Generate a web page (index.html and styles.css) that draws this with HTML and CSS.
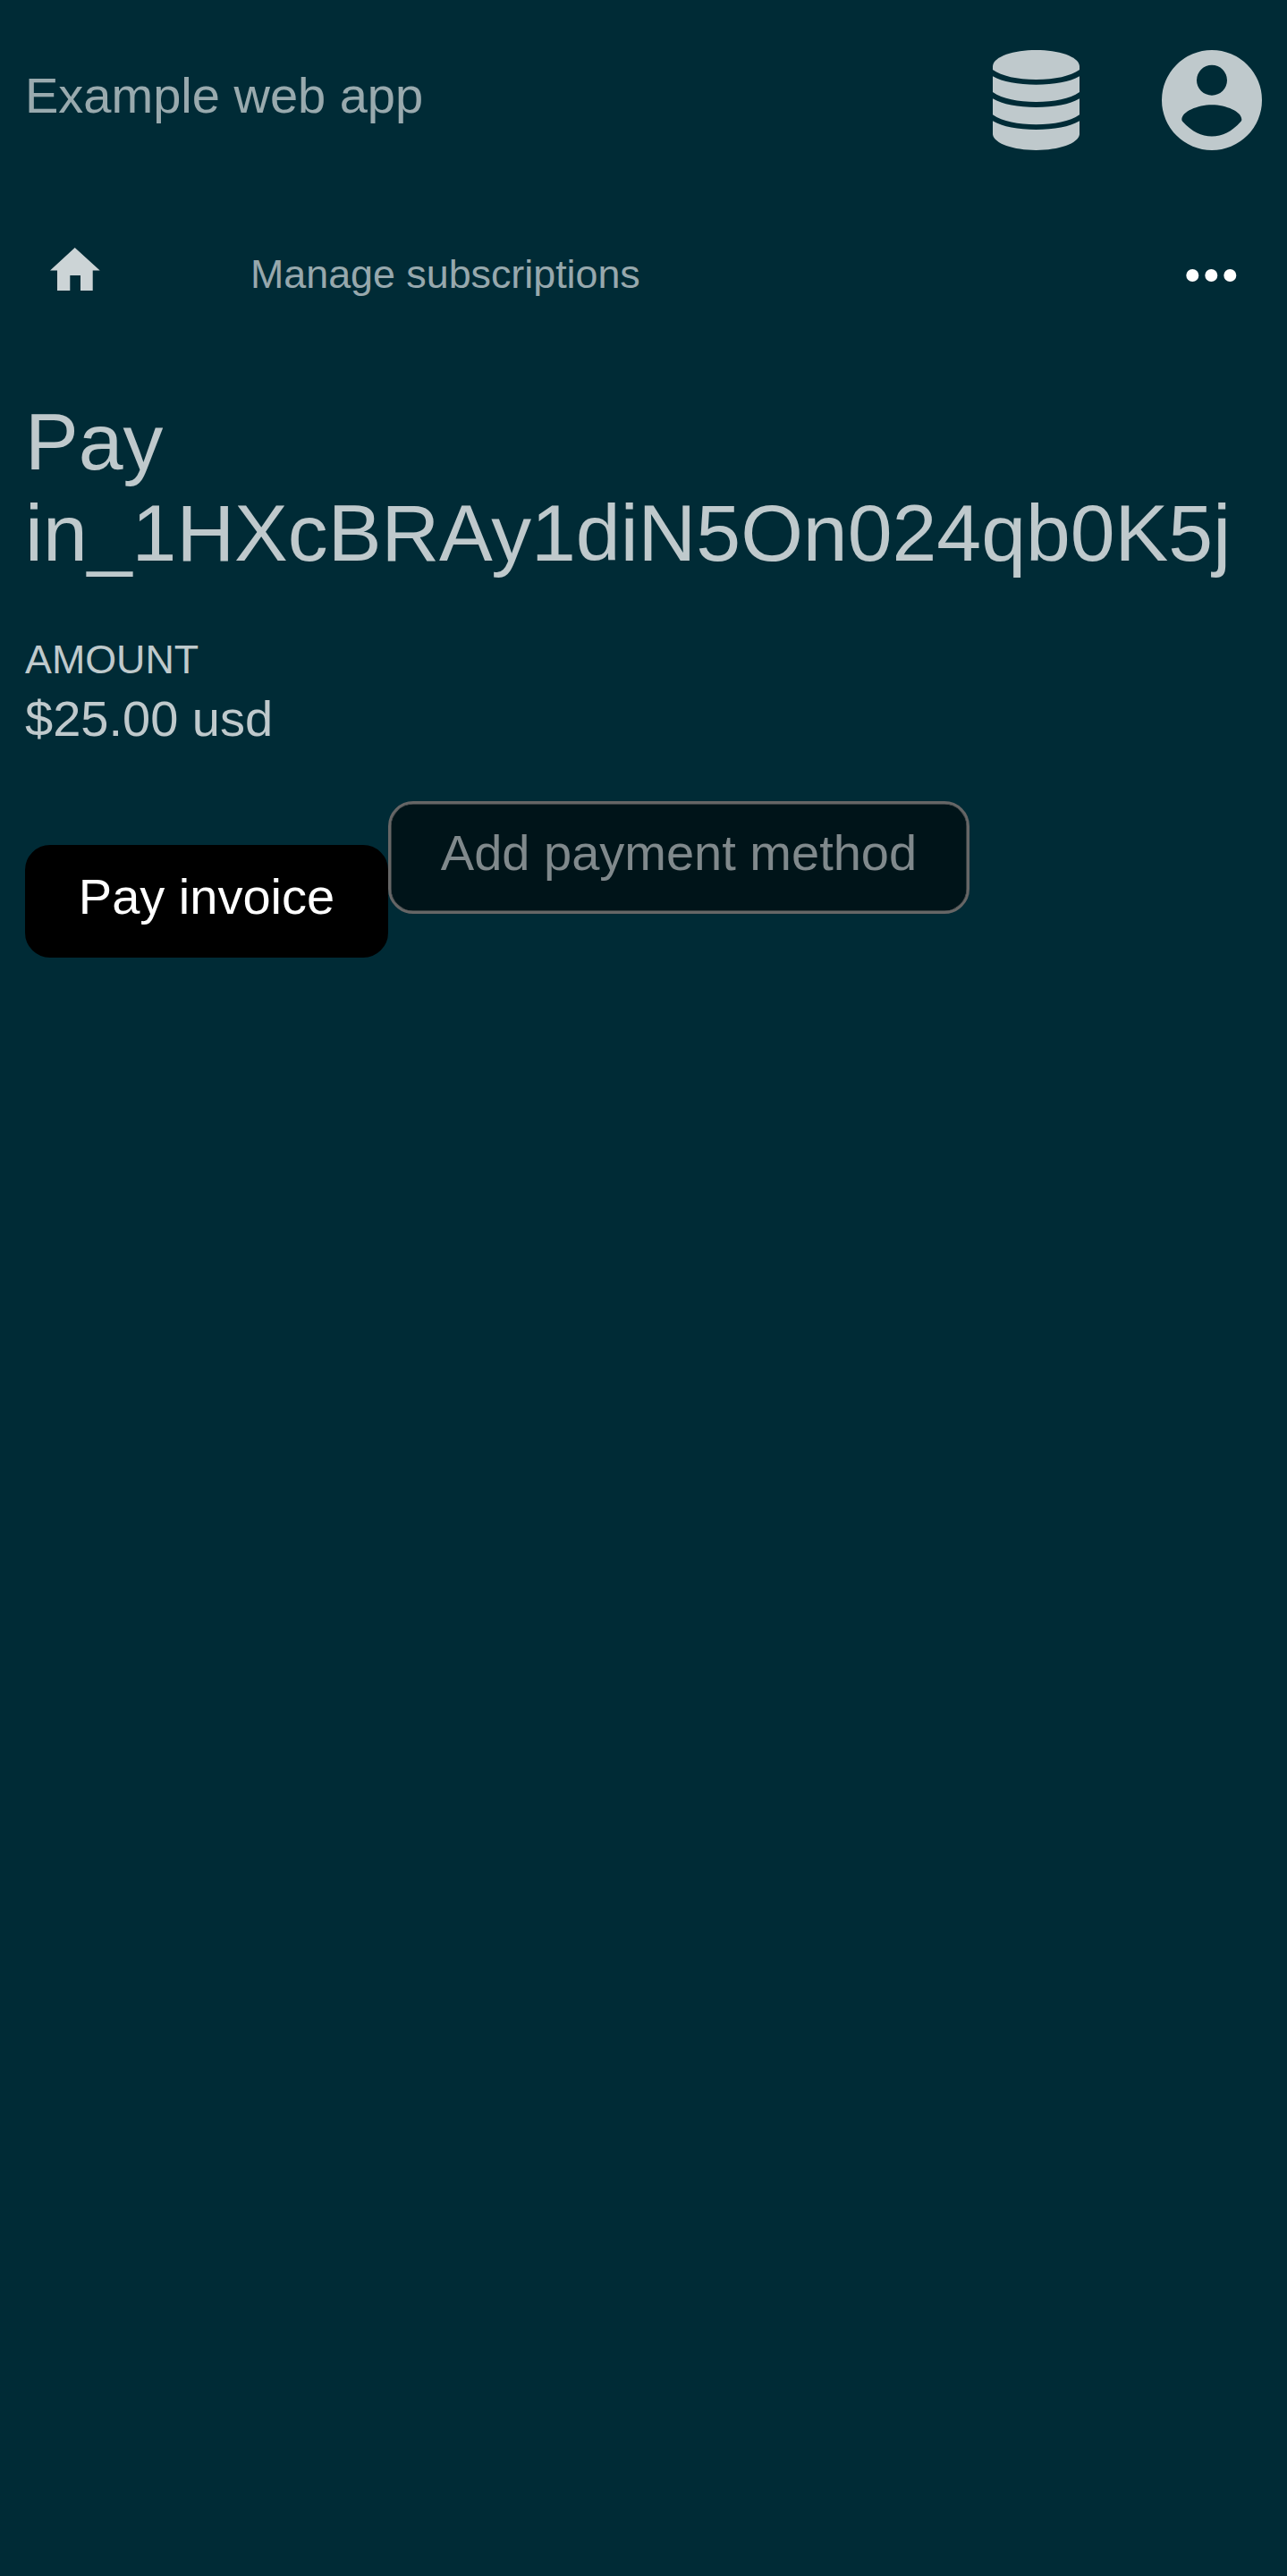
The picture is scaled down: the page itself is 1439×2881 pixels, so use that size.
FILE: index.html
```
<!DOCTYPE html>
<html lang="en">
<head>
<meta charset="utf-8">
<title>Example web app</title>
<link rel="stylesheet" href="styles.css">
</head>
<body>
<header class="topbar">
  <a class="brand">Example web app</a>
  <div class="tools">
    <svg class="icon-db" viewBox="60 47 291 336" preserveAspectRatio="none" aria-hidden="true">
      <path d="M60 100C64 68 130 47 205.500 47S347 68 351 100V113C320 134 270 146 205.500 146S91 134 60 113Z"/>
      <path d="M60 135C93 154 145 163 205.500 163S318 154 351 135V188C318 211 266 221 205.500 221S93 211 60 188Z"/>
      <path d="M60 210C93 230 145 239 205.500 239S318 230 351 210V264C318 287 266 296.500 205.500 296.500S93 287 60 264Z"/>
      <path d="M60 285C93 305 145 314 205.500 314S318 305 351 285V330C347 361 281 383 205.500 383S64 361 60 330Z"/>
    </svg>
    <svg class="icon-user" viewBox="0 0 336 336" aria-hidden="true">
      <path fill-rule="evenodd" d="M168 0a168 168 0 1 0 0 336a168 168 0 1 0 0-336ZM168 50a51 51 0 1 1 0 102a51 51 0 1 1 0-102ZM168 184C216 184 268 207 268 233Q268 237 265 240C235 274 203 289.500 168 289.500S101 274 70 240Q67 237 67 233C67 207 120 184 168 184Z"/>
    </svg>
  </div>
</header>
<nav class="nav">
  <svg class="icon-home" viewBox="0 0 56 48" aria-hidden="true"><path d="M27.700 0L55.700 25.600H47.700V48H34V31H22.300V48H8V25.600H0Z"/></svg>
  <a class="nav-link">Manage subscriptions</a>
  <svg class="icon-more" viewBox="0 0 56 14" aria-hidden="true"><circle cx="6.300" cy="7" r="7"/><circle cx="27.300" cy="7" r="7"/><circle cx="48.300" cy="7" r="7"/></svg>
</nav>
<main class="content">
  <h1 class="title">Pay in_1HXcBRAy1diN5On024qb0K5j</h1>
  <div class="label">AMOUNT</div>
  <div class="value">$25.00 usd</div>
  <div class="actions">
    <button class="btn btn-pay">Pay invoice</button>
    <button class="btn btn-add">Add payment method</button>
  </div>
</main>
</body>
</html>
```
FILE: styles.css
```
* { box-sizing: border-box; }
body {
  margin: 0;
  min-height: 2881px;
  background: #002b36;
  color: rgba(255, 255, 255, .75);
  font-family: "Liberation Sans", Arial, sans-serif;
  font-size: 56px;
}
svg { display: block; fill: currentColor; }
.topbar {
  display: flex;
  justify-content: space-between;
  height: 224px;
  padding: 56px 28px 0;
}
.brand { line-height: 102px; color: rgba(255, 255, 255, .6); }
.tools { display: flex; gap: 92px; }
.icon-db { width: 97px; height: 112px; }
.icon-user { width: 112px; height: 112px; }
.nav {
  display: flex;
  align-items: flex-start;
  height: 219px;
  padding: 53px 56px 0;
  font-size: 44.8px;
}
.icon-home { width: 56px; height: 48px; color: rgba(255, 255, 255, .8); }
.nav-link { margin-left: 168px; line-height: 58px; color: rgba(255, 255, 255, .6); }
.icon-more { width: 56px; height: 14px; margin: 24px 0 0 auto; color: #fff; overflow: visible; }
.content { padding: 0 28px; }
.title {
  margin: 0;
  padding-bottom: 64px;
  font-size: 89.6px;
  line-height: 102px;
  font-weight: 400;
}
.label { font-size: 44.8px; line-height: 52px; }
.value { line-height: 64px; margin-top: 9px; }
.actions { display: flex; align-items: flex-start; margin-top: 60px; }
.btn {
  height: 126px;
  padding: 0 0 11px;
  border: 3px solid #000;
  border-radius: 28px;
  font: inherit;
  line-height: 109px;
  text-align: center;
  white-space: nowrap;
}
.btn-pay { width: 406px; margin-top: 49px; background: #000; color: #fff; }
.btn-add {
  width: 650px;
  background: #001419;
  border-color: #666;
  box-shadow: inset 0 0 0 .5px #666;
  color: #80898c;
}
```
